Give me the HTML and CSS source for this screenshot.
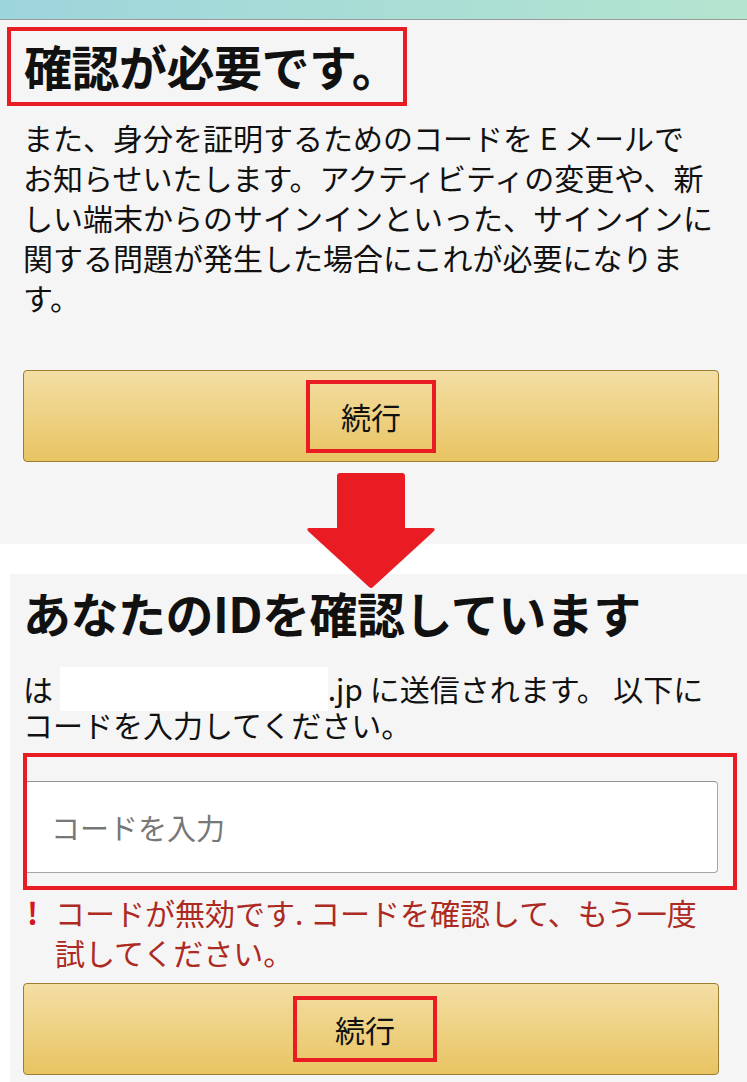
FILE: index.html
```html
<!DOCTYPE html>
<html lang="ja">
<head>
<meta charset="utf-8"/>
<meta content="width=device-width, initial-scale=1.0" name="viewport"/>
<title>確認が必要です</title>
<link rel="stylesheet" href="styles.css">
</head>
<body>
<div class="page">

  <section class="screen screen-first">
    <div class="statusbar"></div>
    <div class="screen-body">
      <h1 class="title title-marked">確認が必要です。</h1>
      <p class="lead">また、身分を証明するためのコードを E メールでお知らせいたします。アクティビティの変更や、新しい端末からのサインインといった、サインインに関する問題が発生した場合にこれが必要になります。</p>
      <button class="btn-primary" type="button"><span class="mark-label">続行</span></button>
    </div>
  </section>

  <!-- step arrow between the two screens -->
  <svg class="step-arrow" viewBox="0 0 130 116" width="130" height="116">
    <path d="M34 0 H96 Q99 0 99 3 V55 H126 Q131 55 127 59 L67 114 Q65 116 63 114 L3 59 Q-1 55 4 55 H31 V3 Q31 0 34 0 Z" fill="#e91c24"/>
  </svg>

  <section class="screen screen-second">
    <h1 class="title">あなたのIDを確認しています</h1>
    <p class="lead lead-tight">は <span class="masked"></span>.jp に送信されます。 以下にコードを入力してください。</p>
    <div class="field-mark">
      <input class="code-input" type="text" placeholder="コードを入力"/>
    </div>
    <div class="error">
      <span class="error-icon">!</span>
      <span class="error-text">コードが無効です. コードを確認して、もう一度試してください。</span>
    </div>
    <button class="btn-primary" type="button"><span class="mark-label mark-label-wide">続行</span></button>
  </section>

</div>
</body>
</html>
```

FILE: styles.css
```css
body {
  margin: 0;
  background: #fff;
  color: #111;
  font-family: "Noto Sans CJK JP", "Noto Sans", sans-serif;
}

.page {
  position: relative;
  width: 747px;
  height: 1082px;
  overflow: hidden;
}

.screen {
  background: #f5f5f5;
}

.statusbar {
  height: 19px;
  background: linear-gradient(to right, #9dd5dc, #b4e5cf);
  border-bottom: 1px solid #9a9a9a;
}

.screen-body {
  padding: 7px 28px 82px 23px;
}

.screen-second {
  margin: 30px 0 0 10px;
  padding: 10px 28px 10px 13px;
}

.title {
  margin: 0;
  font-size: 48px;
  line-height: 56px;
  font-weight: 700;
  letter-spacing: -0.5px;
}

/* red highlight boxes */
.title-marked {
  display: inline-block;
  margin-left: -16px;
  padding: 6px 4px 9px 13px;
  border: 4px solid #e91c24;
}

.lead {
  margin: 11px 0 0;
  max-width: 691px;
  font-size: 30px;
  line-height: 40px;
}

.lead-tight {
  margin-top: 30px;
  line-height: 36px;
}

/* hidden address */
.masked {
  display: inline-block;
  width: 268px;
  height: 44px;
  margin: -10px 0 -6px;
  vertical-align: -4px;
  background: #fff;
}

.btn-primary {
  display: flex;
  align-items: center;
  justify-content: center;
  width: 100%;
  height: 92px;
  margin-top: 53px;
  padding: 0;
  box-sizing: border-box;
  background: linear-gradient(to bottom, #f3dea4, #e8c462);
  border: 1px solid #9c7e31;
  border-radius: 4px;
  color: #111;
  font-family: inherit;
  font-size: 30px;
  cursor: pointer;
}

.mark-label {
  display: inline-block;
  padding: 15px 31px;
  line-height: 35px;
  border: 4px solid #e91c24;
}

.mark-label-wide {
  padding: 12px 38px;
  line-height: 34px;
  margin-right: 12px;
}

.screen-second .btn-primary {
  margin-top: 11px;
}

.field-mark {
  position: relative;
  margin: 11px -18px 0 0;
  padding: 28px 19px 17px 0;
}

.field-mark::after {
  content: "";
  position: absolute;
  inset: 0;
  border: 4px solid #e91c24;
  pointer-events: none;
}

.code-input {
  display: block;
  width: 100%;
  height: 92px;
  box-sizing: border-box;
  padding: 0 0 0 27px;
  background: #fff;
  border: 1px solid #a6a6a6;
  border-top-color: #949494;
  border-radius: 4px;
  font-family: inherit;
  font-size: 29px;
  color: #111;
}

.code-input::placeholder {
  color: #777;
}

.error {
  display: flex;
  margin-top: 2px;
  font-size: 30px;
  line-height: 40px;
  color: #ad2a22;
}

.error-icon {
  flex: none;
  width: 32px;
  padding-left: 4px;
  box-sizing: border-box;
  font-weight: 700;
  color: #d3181c;
}

.step-arrow {
  position: absolute;
  left: 306px;
  top: 473px;
}
```
